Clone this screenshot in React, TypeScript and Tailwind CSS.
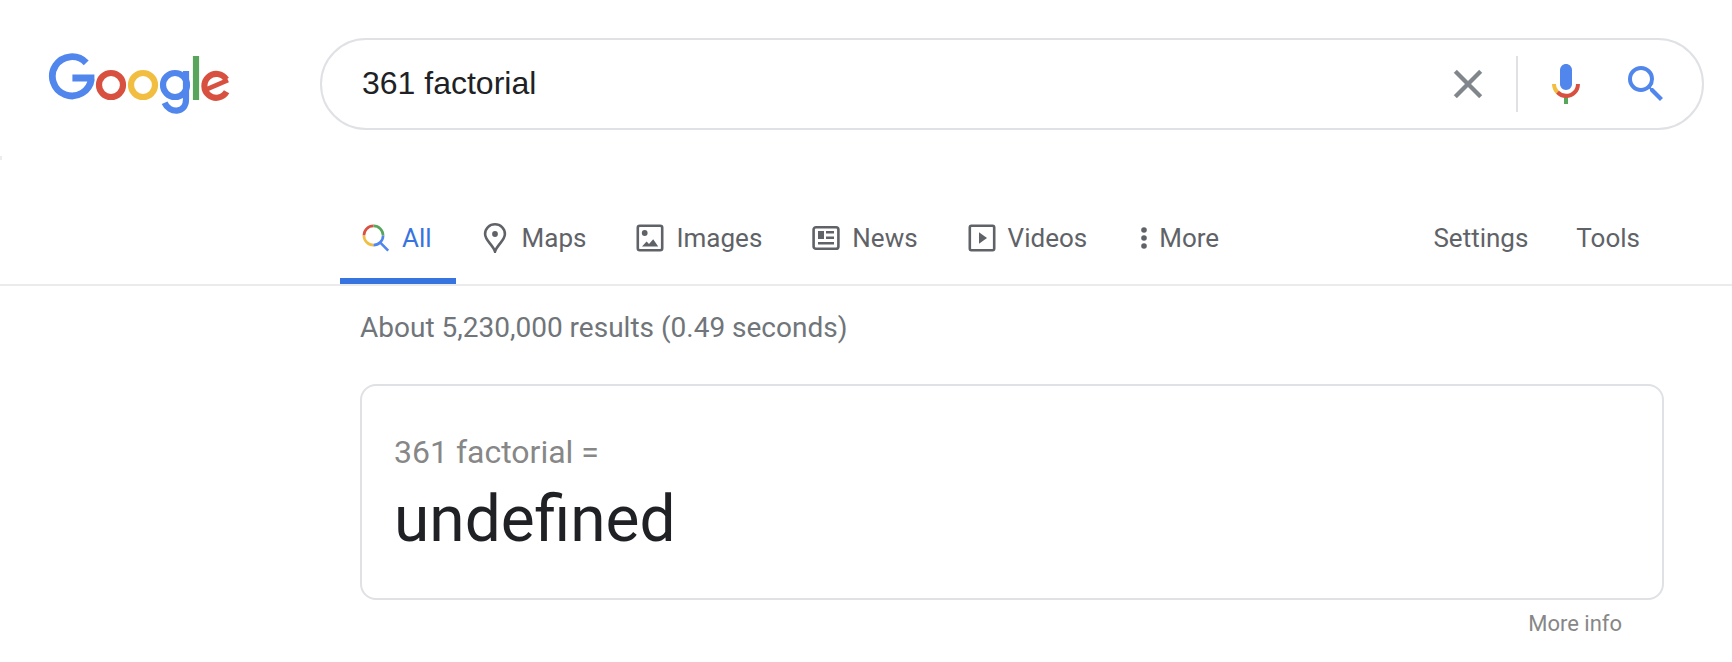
import React, { useState } from "react";

interface Tab {
  name: string;
  icon: React.ReactNode;
}

function GoogleLogo() {
  return (
    <svg
      role="img"
      aria-label="Google"
      className="h-[62px] w-[182px]"
      viewBox="48 53 182 62"
      fill="none"
      strokeWidth="6.2"
    >
      <g stroke="#5186ec">
        <path
          d="M86.2 62.8A19.6 19.6 0 1 0 91.4 79M72.4 78h22"
          strokeWidth="6.8"
        />
        <circle cx="175" cy="85" r="12" />
        <path d="M186 71v28.5c0 14.5-17 14-21.4 3.3" />
      </g>
      <circle cx="111" cy="85" r="12" stroke="#d85140" />
      <circle cx="143" cy="85" r="12" stroke="#f1be42" />
      <path d="M196 56v44" stroke="#58a55c" />
      <path d="M226.3 79.4A11.900 11.900 0 1 0 226.600 91.800" stroke="#d85140" />
      <path d="M206.500 89.400L228 80.200" stroke="#d85140" strokeWidth="4.600" />
    </svg>
  );
}

const tabs: Tab[] = [
  {
    name: "All",
    icon: (
      <svg className="size-7" viewBox="0 0 28 28" fill="none" strokeWidth="2.6">
        <path d="M1.9 11.5a9.6 9.6 0 0 1 9.6-9.6" stroke="#d85140" />
        <path d="M11.5 1.9a9.6 9.6 0 0 1 9.6 9.6" stroke="#58a55c" />
        <path d="M1.9 11.5a9.6 9.6 0 0 0 9.6 9.6" stroke="#f1be42" />
        <path
          d="M21.1 11.5a9.6 9.6 0 0 1-9.6 9.6M17.8 18.2l8.4 8.4"
          stroke="#5186ec"
        />
      </svg>
    ),
  },
  {
    name: "Maps",
    icon: (
      <svg className="h-[30px] w-7" viewBox="1 0 28 30" fill="none">
        <path
          d="M14 1.3c-5.6 0-9.9 4.3-9.9 9.8 0 6.6 7.6 10.2 9.9 17.4 2.3-7.2 9.9-10.8 9.9-17.4 0-5.5-4.3-9.8-9.9-9.8z"
          stroke="currentColor"
          strokeWidth="2.6"
        />
        <circle cx="14" cy="11" r="2.9" fill="currentColor" />
      </svg>
    ),
  },
  {
    name: "Images",
    icon: (
      <svg className="size-7" viewBox="0 0 28 28" fill="none">
        <rect
          x="1.8"
          y="1.8"
          width="24.4"
          height="24.4"
          rx="2"
          stroke="currentColor"
          strokeWidth="2.6"
        />
        <circle cx="8.7" cy="9" r="2.9" fill="currentColor" />
        <path
          d="M6 22.5l4.6-5 2.4 2.6 4.2-4.8 5 7.2z"
          fill="currentColor"
        />
      </svg>
    ),
  },
  {
    name: "News",
    icon: (
      <svg className="size-7" viewBox="0 0 28 28" fill="none">
        <rect
          x="1.6"
          y="3.2"
          width="24.8"
          height="21.6"
          rx="2.4"
          stroke="currentColor"
          strokeWidth="2.6"
        />
        <path
          d="M6 7h6v8H6zM14 7h8v2.4h-8zM14 12.4h8V15h-8zM6 18h16v2.6H6z"
          fill="currentColor"
        />
      </svg>
    ),
  },
  {
    name: "Videos",
    icon: (
      <svg className="size-7" viewBox="0 0 28 28" fill="none">
        <rect
          x="1.8"
          y="1.8"
          width="24.4"
          height="24.4"
          rx="1.6"
          stroke="currentColor"
          strokeWidth="2.6"
        />
        <path d="M11 8.2v11.6l8-5.8z" fill="currentColor" />
      </svg>
    ),
  },
];

export default function App() {
  const [query, setQuery] = useState<string>("361 factorial");
  const [active, setActive] = useState<string>("All");

  return (
    <div className="bg-white pt-[38px] font-['Roboto',sans-serif] text-[#5f6368]">
      <header className="flex items-start pr-7">
        <a href="#" className="w-80 shrink-0 pt-[15px] pl-12">
          <GoogleLogo />
        </a>
        <form
          className="flex h-[92px] flex-1 items-center rounded-full border-2 border-[#dfe1e5] pr-8 pl-10"
          onSubmit={(e: React.FormEvent<HTMLFormElement>) => e.preventDefault()}
        >
          <input
            type="text"
            name="q"
            aria-label="Search"
            value={query}
            className="min-w-0 flex-1 pb-0.5 font-['Liberation_Sans',sans-serif] text-[32px] leading-10 text-[#202124] outline-none"
            onChange={(e: React.ChangeEvent<HTMLInputElement>) =>
              setQuery(e.target.value)
            }
          />
          <button
            type="button"
            aria-label="Clear"
            className="mr-6 text-[#80868b]"
            onClick={() => setQuery("")}
          >
            <svg
              className="size-12"
              viewBox="0 0 24 24"
              fill="currentColor"
              stroke="currentColor"
              strokeWidth="0.2"
            >
              <path d="M19 6.41L17.59 5 12 10.59 6.41 5 5 6.41 10.59 12 5 17.59 6.41 19 12 13.41 17.59 19 19 17.59 13.41 12z" />
            </svg>
          </button>
          <div className="mr-6 h-14 w-0.5 bg-[#dfe1e5]" />
          <button type="button" aria-label="Search by voice" className="mr-8">
            <svg className="size-12" viewBox="0 0 24 24">
              <path
                fill="#5186ec"
                d="m12 15c1.66 0 3-1.31 3-2.97v-7.02c0-1.66-1.34-3.01-3-3.01s-3 1.34-3 3.01v7.02c0 1.66 1.34 2.97 3 2.97z"
              />
              <path fill="#58a55c" d="m11 18.08h2v3.92h-2z" />
              <path
                fill="#f1be42"
                d="m7.05 16.87c-1.27-1.33-2.05-2.83-2.05-4.87h2c0 1.45 0.56 2.42 1.47 3.38v0.32l-1.15 1.18z"
              />
              <path
                fill="#d85140"
                d="m12 16.93a4.97 5.25 0 0 1 -3.54 -1.55l-1.41 1.49c1.26 1.34 3.02 2.13 4.95 2.13 3.87 0 6.99-2.92 6.99-7h-1.99c0 2.92-2.24 4.93-5 4.93z"
              />
            </svg>
          </button>
          <button type="submit" aria-label="Google Search">
            <svg className="size-12" viewBox="0 0 24 24" fill="#5186ec">
              <path d="M15.5 14h-.79l-.28-.27A6.471 6.471 0 0 0 16 9.5 6.5 6.5 0 1 0 9.5 16c1.61 0 3.09-.59 4.23-1.57l.27.28v.79l5 4.99L20.49 19l-4.99-5zm-6 0C7.01 14 5 11.99 5 9.5S7.01 5 9.5 5 14 7.01 14 9.5 11.99 14 9.5 14z" />
            </svg>
          </button>
        </form>
      </header>

      <div className="mt-[26px] h-1 w-0.5 bg-[#ececec]" />

      <nav className="mt-10 flex items-stretch border-b-2 border-[#ebebeb] pr-[92px] pl-[340px] text-[26px] leading-8">
        <div className="flex gap-1">
          {tabs.map((tab) => (
            <a
              key={tab.name}
              href="#"
              className={
                tab.name === active
                  ? "flex h-[84px] items-center gap-3 border-b-6 border-[#3874e0] pr-6 pb-0.5 pl-[22px] text-[#3874e0]"
                  : "flex h-[84px] items-center gap-3 border-b-6 border-transparent pr-6 pb-0.5 pl-[22px]"
              }
              onClick={() => setActive(tab.name)}
            >
              {tab.icon}
              {tab.name}
            </a>
          ))}
          <button
            type="button"
            className="flex h-[84px] items-center gap-2 border-b-6 border-transparent pr-6 pb-0.5 pl-[22px]"
          >
            <svg className="h-7 w-3.5" viewBox="0 0 14 28" fill="currentColor">
              <circle cx="7" cy="6" r="2.8" />
              <circle cx="7" cy="14" r="2.8" />
              <circle cx="7" cy="22" r="2.8" />
            </svg>
            More
          </button>
        </div>
        <div className="ml-auto flex gap-12 border-b-6 border-transparent pb-0.5">
          <button type="button">Settings</button>
          <button type="button">Tools</button>
        </div>
      </nav>

      <main className="pt-[26px] pr-[68px] pb-6 pl-[360px]">
        <p className="text-[28px] leading-8 text-[#70757a]">
          About 5,230,000 results (0.49 seconds)
        </p>
        <section className="mt-10 rounded-2xl border-2 border-[#dfe1e5] pt-[46px] pb-[42px] pl-8">
          <p className="text-[32px] leading-10 text-[#878787]">
            361 factorial =
          </p>
          <p className="mt-3 text-[64px] leading-[72px] text-[#202124]">
            undefined
          </p>
        </section>
        <div className="mt-3 flex justify-end pr-[42px]">
          <a href="#" className="text-[22px] leading-6 text-[#878787]">
            More info
          </a>
        </div>
      </main>
    </div>
  );
}
